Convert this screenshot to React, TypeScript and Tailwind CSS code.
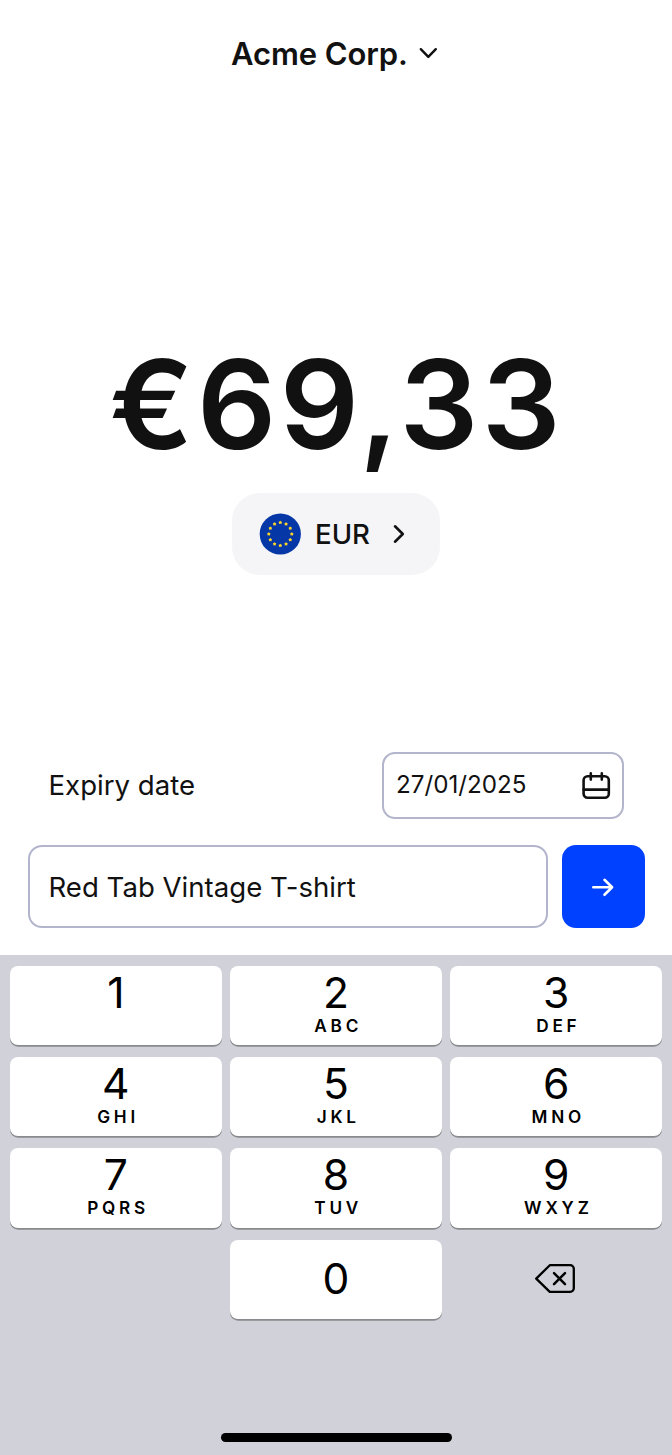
import { useState } from 'react';

interface KeyDef {
  digit: string;
  letters?: string;
}

const KEYS: KeyDef[] = [
  { digit: '1', letters: '' },
  { digit: '2', letters: 'ABC' },
  { digit: '3', letters: 'DEF' },
  { digit: '4', letters: 'GHI' },
  { digit: '5', letters: 'JKL' },
  { digit: '6', letters: 'MNO' },
  { digit: '7', letters: 'PQRS' },
  { digit: '8', letters: 'TUV' },
  { digit: '9', letters: 'WXYZ' },
];

// Twelve stars, one every 30 degrees
const STARS = Array.from({ length: 12 }, (_, i) => {
  const angle = (i * Math.PI) / 6;
  return { x: 21.3 + 11.5 * Math.sin(angle), y: 21 - 11.5 * Math.cos(angle) };
});

function EuFlag() {
  return (
    <svg width="42" height="42" viewBox="0 0 42 42">
      <circle cx="21.3" cy="21" r="20.6" fill="#0637a6" />
      {STARS.map((star, idx) => (
        <path
          key={idx}
          transform={`translate(${star.x} ${star.y})`}
          d="M0-1.7.9-1 1.7-.6 1.3.4 1.2 1.5 0 1.3-1.2 1.5-1.3.4-1.7-.6-.9-1Z"
          fill="#fcd52a"
        />
      ))}
    </svg>
  );
}

function CalendarIcon() {
  return (
    <svg width="30" height="30" viewBox="0 0 30 30" fill="none" stroke="#111" strokeWidth="2.6" strokeLinecap="round">
      <rect x="2.6" y="5.2" width="25.2" height="21.6" rx="4" />
      <path d="M2.6 18.6H27.8M9.8 2.4v6.2M20.8 2.4v6.2" />
    </svg>
  );
}

function BackspaceIcon() {
  return (
    <svg
      className="mr-[2px]"
      width="42"
      height="32"
      viewBox="0 0 42 32"
      fill="none"
      stroke="#000"
      strokeWidth="2.3"
      strokeLinecap="round"
      strokeLinejoin="round"
    >
      <path d="M2.2 15.6 15.8 2.2h20.4a3.6 3.6 0 0 1 3.6 3.6v19.4a3.6 3.6 0 0 1-3.6 3.6H15.8Z" />
      <path d="m20 10.1 11 11M31 10.1l-11 11" strokeWidth="2.5" />
    </svg>
  );
}

function Key({ digit, letters, onPress }: KeyDef & { onPress: (digit: string) => void }) {
  return (
    <button
      onClick={() => onPress(digit)}
      className={`flex h-[79.4px] flex-col items-center rounded-lg bg-white text-black shadow-[0_1.7px_0_#898a8d] ${
        letters === undefined ? 'justify-center' : 'pt-1'
      }`}
    >
      <span className="mb-px text-[42.6px] leading-[45px]">{digit}</span>
      {letters && (
        <span className="pl-[4.5px] text-[17.2px] leading-5 font-semibold tracking-[3.8px]">{letters}</span>
      )}
    </button>
  );
}

export default function App() {
  const [amount, setAmount] = useState('69,33');
  const [description, setDescription] = useState('Red Tab Vintage T-shirt');

  const handlePress = (digit: string) => setAmount((prev) => prev + digit);

  return (
    <div className="flex h-[1455px] w-[672px] flex-col overflow-hidden bg-white font-['Inter',sans-serif] text-[#111]">
      {/* Account switcher */}
      <header className="flex h-[108px] items-center justify-center gap-[11.5px] pr-[2.5px]">
        <h1 className="text-[31px] font-semibold tracking-[-0.1px]">Acme Corp.</h1>
        <svg width="19" height="14" viewBox="0 0 19 14" fill="none" stroke="#111" strokeWidth="2.4" strokeLinecap="round" strokeLinejoin="round">
          <path d="m1.8 2.2 7.5 7.7 7.5-7.7" />
        </svg>
      </header>

      {/* Amount */}
      <main className="flex flex-1 flex-col items-center pt-[221px]">
        <div className="pl-[1.5px] text-[124px] leading-[150px] font-semibold tracking-[3.6px]">€{amount}</div>
        <button className="mt-[14px] flex h-[82px] w-[208px] items-center rounded-[28px] bg-[#f5f5f8] pl-[27px]">
          <EuFlag />
          <span className="ml-[14px] pt-px text-[27.6px] font-[450]">EUR</span>
          <svg className="ml-[22px]" width="14" height="20" viewBox="0 0 14 20" fill="none" stroke="#111" strokeWidth="2.6" strokeLinecap="round" strokeLinejoin="round">
            <path d="m3 2.3 7.8 7.7L3 17.7" />
          </svg>
        </button>
      </main>

      {/* Details */}
      <section className="px-[27.5px] pb-[27px]">
        <div className="flex items-center justify-between pr-[21px] pl-[21px]">
          <span className="text-[27.6px]">Expiry date</span>
          <div className="flex h-[67px] w-[242px] items-center justify-between rounded-[13px] border-2 border-[#b2b5cb] pr-[11px] pl-[12.5px]">
            <span className="text-[24.2px]">27/01/2025</span>
            <CalendarIcon />
          </div>
        </div>
        <div className="mt-[26px] flex gap-[13.5px]">
          <input
            value={description}
            onChange={(e) => setDescription(e.target.value)}
            className="h-[83px] min-w-0 flex-1 rounded-[14px] border-2 border-[#b2b5cb] px-[19px] text-[27.6px] outline-none"
          />
          <button className="flex size-[83px] items-center justify-center rounded-[14px] bg-[#0040ff]">
            <svg width="24" height="20" viewBox="0 0 24 20" fill="none" stroke="#fff" strokeWidth="2.6" strokeLinecap="round" strokeLinejoin="round">
              <path d="M2.3 10.3h18.8M13.5 2.8 21.1 10.3l-7.6 7.5" />
            </svg>
          </button>
        </div>
      </section>

      {/* Keypad */}
      <footer className="flex h-[500px] flex-col items-center justify-between bg-[#d1d1d9] px-[10px] pt-[10.5px] pb-[13.5px]">
        <div className="grid w-full grid-cols-3 gap-x-[8.4px] gap-y-3">
          {KEYS.map((key) => (
            <Key key={key.digit} digit={key.digit} letters={key.letters} onPress={handlePress} />
          ))}
          <span />
          <Key digit="0" onPress={handlePress} />
          <button onClick={() => setAmount((prev) => prev.slice(0, -1))} className="flex items-center justify-center">
            <BackspaceIcon />
          </button>
        </div>
        <div className="h-[9px] w-[231px] rounded-full bg-black" />
      </footer>
    </div>
  );
}
